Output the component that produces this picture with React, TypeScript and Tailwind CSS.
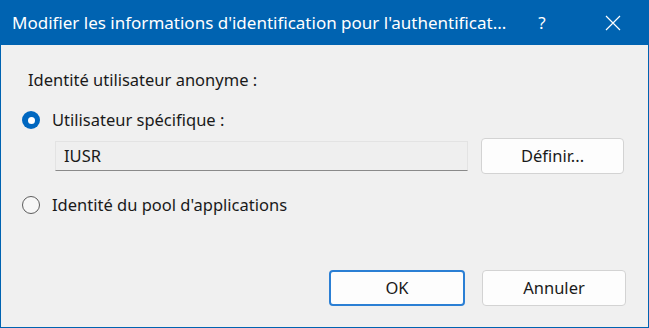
import React from 'react';

const font = { fontFamily: '"Segoe UI", "Noto Sans", sans-serif' };

function Radio({ checked }: { checked: boolean }) {
    if (checked) {
        return (
            <span className="flex h-[18px] w-[18px] shrink-0 items-center justify-center rounded-full bg-[#0067c0]">
                <span className="h-[7px] w-[7px] rounded-full bg-white" />
            </span>
        );
    }
    return <span className="h-[18px] w-[18px] shrink-0 rounded-full border border-[#5d5d5d] bg-[#f7f7f7]" />;
}

export default function App() {
    return (
        <div
            className="flex h-[328px] w-[649px] flex-col border border-[#0063b1] bg-[#f0f0f0] text-[16.5px] text-[#1a1a1a]"
            style={font}
        >
            {/* title bar */}
            <div className="flex h-[44px] shrink-0 items-center bg-[#0063b1] pl-[11px] pr-[27px] text-white">
                <span className="min-w-0 flex-1 whitespace-nowrap text-[17px] leading-6">
                    Modifier les informations d'identification pour l'authentificat...
                </span>
                <span className="w-[20px] text-center text-[17px] leading-6">?</span>
                <span className="ml-[53px] flex h-4 w-4 items-center justify-center">
                    <svg width="16" height="16" viewBox="0 0 16 16" fill="none" stroke="white" strokeWidth="1.2">
                        <path d="M1 1 15 15M15 1 1 15" />
                    </svg>
                </span>
            </div>

            <div className="flex flex-1 flex-col pl-[21px] pr-[24px] pb-[21px]">
                <div className="mt-[25px] pl-[6px] leading-5">Identité utilisateur anonyme :</div>

                <div className="mt-[20px] flex items-center gap-[12px] leading-5">
                    <Radio checked />
                    <span>Utilisateur spécifique :</span>
                </div>

                <div className="mt-[8px] flex items-center">
                    <div className="ml-[33px] flex h-[30px] w-[413px] items-center border border-[#e3e3e3] border-b-[#8a8a8a] bg-[#efefef] pl-[8px] leading-5">
                        IUSR
                    </div>
                    <button className="ml-[13px] h-[36px] w-[143px] rounded-[4px] border border-[#d3d3d3] bg-[#fdfdfd] leading-5">
                        Définir...
                    </button>
                </div>

                <div className="mt-[21px] flex items-center gap-[12px] leading-5">
                    <Radio checked={false} />
                    <span>Identité du pool d'applications</span>
                </div>

                <div className="mt-auto flex justify-end gap-[17px]">
                    <button className="h-[36px] w-[136px] rounded-[4px] border-2 border-[#2b7fd4] bg-[#fdfdfd] leading-5">
                        OK
                    </button>
                    <button className="-mr-[2px] h-[36px] w-[144px] rounded-[4px] border border-[#d3d3d3] bg-[#fdfdfd] leading-5">
                        Annuler
                    </button>
                </div>
            </div>
        </div>
    );
}
